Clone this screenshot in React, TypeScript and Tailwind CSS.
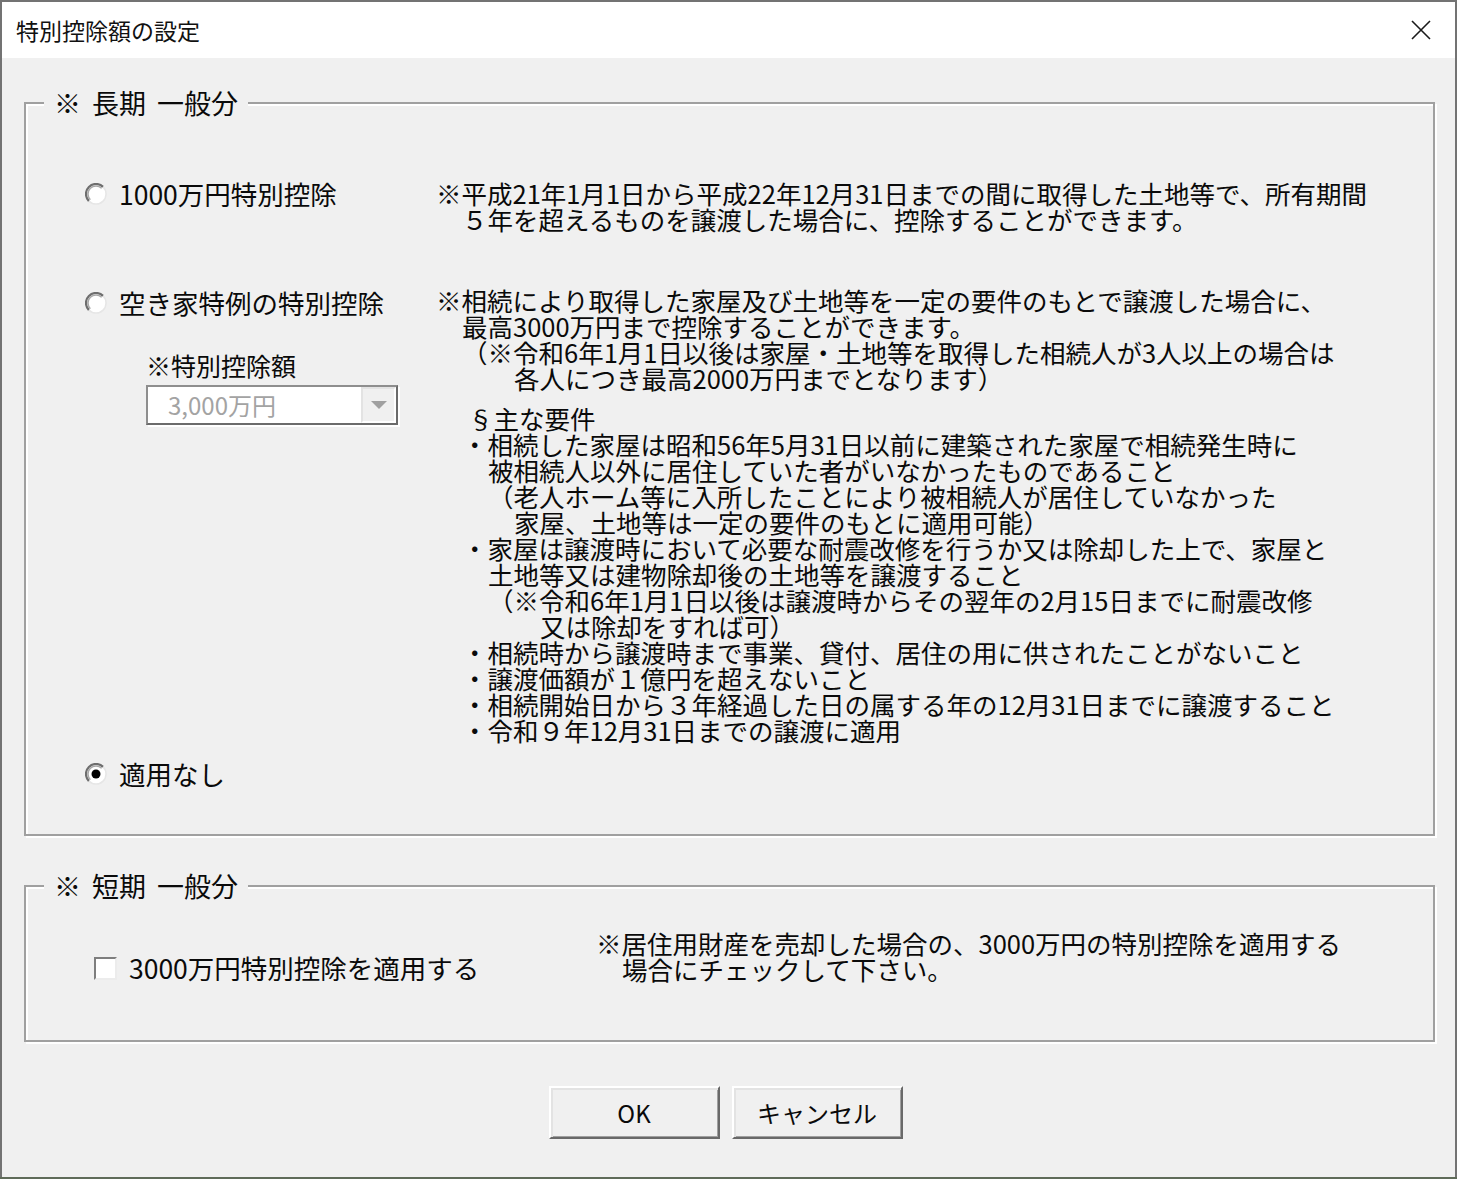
import React from "react";

const FONT = '"Noto Sans CJK JP", "Noto Sans", sans-serif';

const Radio = ({ checked }: { checked?: boolean }) => (
  <svg width="22" height="22" viewBox="0 0 22 22" className="shrink-0">
    <circle cx="11" cy="11" r="10" fill="#fff" />
    <path d="M3.9 18.1 A10 10 0 0 1 18.1 3.9" fill="none" stroke="#6e6e6e" strokeWidth="2.2" />
    <path d="M5.3 16.7 A8 8 0 0 1 16.7 5.3" fill="none" stroke="#a8a8a8" strokeWidth="1.6" />
    <path d="M18.1 3.9 A10 10 0 0 1 3.9 18.1" fill="none" stroke="#e6e6e6" strokeWidth="1.5" />
    {checked && <circle cx="11" cy="11" r="4.5" fill="#000" />}
  </svg>
);

const RadioRow = ({ label, checked }: { label: string; checked?: boolean }) => (
  <div className="flex items-center gap-[12px] h-[36px]">
    <Radio checked={checked} />
    <span className="text-[26.5px] leading-[36px] whitespace-nowrap">{label}</span>
  </div>
);

const Line = ({ indent = 0, children }: { indent?: number; children: React.ReactNode }) => {
  // indents are fixed steps, written out so tailwind picks them up
  const pad =
    indent === 0 ? "" :
    indent === 1 ? "pl-[26px]" :
    indent === 2 ? "pl-[52px]" :
    indent === 3 ? "pl-[78px]" :
    "pl-[104px]";
  return <div className={`${pad} h-[26px] leading-[26px] whitespace-nowrap`}>{children}</div>;
};

const GroupBox = ({ title, className, children }: { title: string; className?: string; children: React.ReactNode }) => (
  <fieldset className={`border-2 border-[#a0a0a0] shadow-[2px_2px_0_#fff,inset_2px_2px_0_#fff] ${className ?? ""}`}>
    <legend className="ml-[18px] px-[10px] bg-[#f0f0f0] text-[27px] leading-[36px] [word-spacing:5px]">{title}</legend>
    {children}
  </fieldset>
);

export default function App() {
  return (
    <div className="w-[1457px] h-[1179px] bg-[#5f6b59] pb-[2px]" style={{ fontFamily: FONT }}>
      <div className="h-full border-2 border-b-0 border-[#737373] flex flex-col text-[#0a0a0a]">
        {/* title bar */}
        <div className="h-[56px] bg-white flex items-center justify-between pl-[14px] pr-[24px]">
          <span className="text-[23px] text-[#111]">特別控除額の設定</span>
          <svg width="20" height="20" viewBox="0 0 20 20">
            <path d="M1 1 L19 19 M19 1 L1 19" stroke="#1a1a1a" strokeWidth="1.6" />
          </svg>
        </div>

        {/* body */}
        <div className="flex-1 bg-[#f0f0f0] pl-[22px] pr-[20px] pt-[27px]">
          <GroupBox title="※ 長期 一般分">
            <div className="pl-[59px] pb-[42px]">
              {/* 1000万 */}
              <div className="flex items-start mt-[55px]">
                <div className="w-[351px] shrink-0">
                  <RadioRow label="1000万円特別控除" />
                </div>
                <div className="mt-[4px] text-[25.5px]">
                  <Line>※平成21年1月1日から平成22年12月31日までの間に取得した土地等で、所有期間</Line>
                  <Line indent={1}>５年を超えるものを譲渡した場合に、控除することができます。</Line>
                </div>
              </div>

              {/* 空き家 */}
              <div className="flex items-start mt-[53px]">
                <div className="w-[351px] shrink-0">
                  <RadioRow label="空き家特例の特別控除" />
                  <div className="ml-[61px] mt-[28px] text-[25px] leading-[32px]">※特別控除額</div>
                  <div className="ml-[61px] mt-[4px] w-[252px] h-[40px] border-2 border-t-[#8e8e8e] border-l-[#8e8e8e] border-r-[#6b6b6b] border-b-[#6b6b6b] bg-white shadow-[2px_2px_0_#fff] flex items-center">
                    <span className="flex-1 pl-[20px] text-[24px] text-[#a3a3a3]">3,000万円</span>
                    <div className="w-[35px] h-full bg-[#f0f0f0] border-2 border-t-[#e3e3e3] border-l-[#e3e3e3] border-r-white border-b-white flex items-center justify-center">
                      <svg width="16" height="8" viewBox="0 0 16 8">
                        <path d="M0 0 H16 L8 8 Z" fill="#a0a0a0" />
                      </svg>
                    </div>
                  </div>
                </div>
                <div className="mt-[2px] text-[25.5px]">
                  <Line>※相続により取得した家屋及び土地等を一定の要件のもとで譲渡した場合に、</Line>
                  <Line indent={1}>最高3000万円まで控除することができます。</Line>
                  <Line indent={1}>（※令和6年1月1日以後は家屋・土地等を取得した相続人が3人以上の場合は</Line>
                  <Line indent={3}>各人につき最高2000万円までとなります）</Line>
                  <div className="mt-[14px]">
                    <div className="pl-[32px] h-[26px] leading-[26px] whitespace-nowrap">§主な要件</div>
                    <Line indent={1}>・相続した家屋は昭和56年5月31日以前に建築された家屋で相続発生時に</Line>
                    <Line indent={2}>被相続人以外に居住していた者がいなかったものであること</Line>
                    <Line indent={2}>（老人ホーム等に入所したことにより被相続人が居住していなかった</Line>
                    <Line indent={3}>家屋、土地等は一定の要件のもとに適用可能）</Line>
                    <Line indent={1}>・家屋は譲渡時において必要な耐震改修を行うか又は除却した上で、家屋と</Line>
                    <Line indent={2}>土地等又は建物除却後の土地等を譲渡すること</Line>
                    <Line indent={2}>（※令和6年1月1日以後は譲渡時からその翌年の2月15日までに耐震改修</Line>
                    <Line indent={4}>又は除却をすれば可）</Line>
                    <Line indent={1}>・相続時から譲渡時まで事業、貸付、居住の用に供されたことがないこと</Line>
                    <Line indent={1}>・譲渡価額が１億円を超えないこと</Line>
                    <Line indent={1}>・相続開始日から３年経過した日の属する年の12月31日までに譲渡すること</Line>
                    <Line indent={1}>・令和９年12月31日までの譲渡に適用</Line>
                  </div>
                </div>
              </div>

              {/* 適用なし */}
              <div className="mt-[13px]">
                <RadioRow label="適用なし" checked />
              </div>
            </div>
          </GroupBox>

          <GroupBox title="※ 短期 一般分" className="mt-[32px]">
            <div className="pl-[68px] pb-[54px]">
              <div className="flex items-start mt-[26px]">
                <div className="w-[502px] shrink-0 mt-[20px] flex items-center gap-[12px] h-[36px]">
                  <div className="w-[23px] h-[23px] bg-white border-2 border-t-[#7e7e7e] border-l-[#7e7e7e] border-r-[#ececec] border-b-[#ececec] shrink-0" />
                  <span className="text-[26.5px] leading-[36px] whitespace-nowrap">3000万円特別控除を適用する</span>
                </div>
                <div className="text-[25.5px]">
                  <Line>※居住用財産を売却した場合の、3000万円の特別控除を適用する</Line>
                  <Line indent={1}>場合にチェックして下さい。</Line>
                </div>
              </div>
            </div>
          </GroupBox>

          {/* buttons */}
          <div className="flex justify-center gap-[12px] mt-[44px] pr-[8px]">
            <button className="w-[171px] h-[53px] bg-[#f0f0f0] border-2 border-t-white border-l-white border-r-[#696969] border-b-[#696969] shadow-[inset_2px_2px_0_#e3e3e3,inset_-1px_-1px_0_#a0a0a0] text-[24px] leading-none">
              OK
            </button>
            <button className="w-[171px] h-[53px] bg-[#f0f0f0] border-2 border-t-white border-l-white border-r-[#696969] border-b-[#696969] shadow-[inset_2px_2px_0_#e3e3e3,inset_-1px_-1px_0_#a0a0a0] text-[24px] leading-none">
              キャンセル
            </button>
          </div>
        </div>
      </div>
    </div>
  );
}
